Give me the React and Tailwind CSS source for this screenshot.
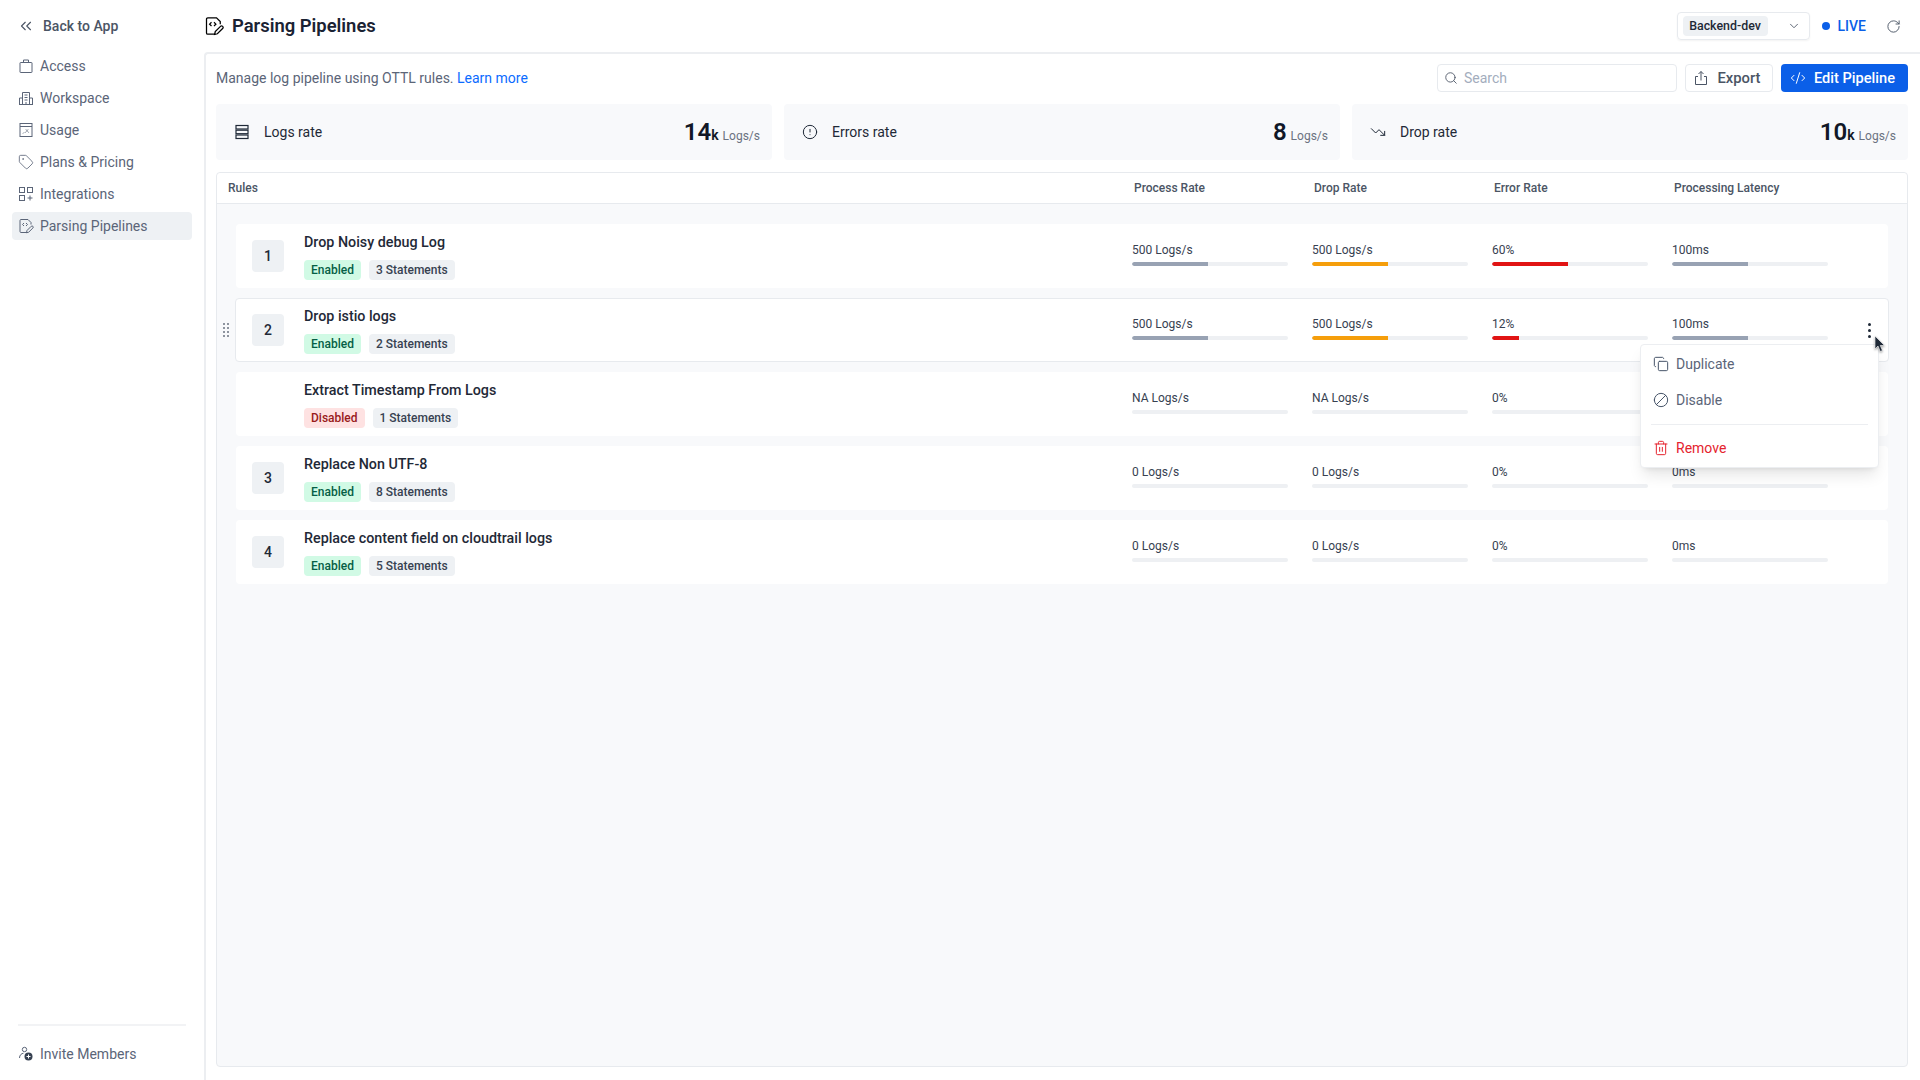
import {
  ChevronDown,
  ChevronsLeft,
  CircleAlert,
  CodeXml,
  Ban,
  Copy,
  RotateCw,
  Search,
  Tag,
  Trash2,
  TrendingDown,
} from "lucide-react";

const FONT = "font-['Roboto','Liberation_Sans',sans-serif]";

function BagIcon() {
  return (
    <svg width="16" height="16" viewBox="0 0 16 16" fill="none" stroke="currentColor" strokeWidth="1">
      <rect x="2" y="4.500" width="12" height="10" rx="0.500" />
      <path d="M5.500 4.500V2h5v2.500" />
    </svg>
  );
}

function BuildingIcon() {
  return (
    <svg width="16" height="16" viewBox="0 0 16 16" fill="none" stroke="currentColor" strokeWidth="1">
      <path d="M4.500 14.500V2.500h7v12" />
      <path d="M1.500 14.500V8h3M11.500 8h3v6.500M1 14.500h14" />
      <path d="M6.500 5h3M6.500 7.500h3M6.500 10h3M8 12v2.500" />
    </svg>
  );
}

function UsageIcon() {
  return (
    <svg width="16" height="16" viewBox="0 0 16 16" fill="none" stroke="currentColor" strokeWidth="1">
      <rect x="2" y="1.500" width="12" height="13" />
      <path d="M2 4.500h12" />
      <path d="M5 11.500l1.500-1.500M8 7.500l3 3.500M10 7.500l-3 3.500" strokeDasharray="1.500 1" />
    </svg>
  );
}

function IntegrationsIcon() {
  return (
    <svg width="16" height="16" viewBox="0 0 16 16" fill="none" stroke="currentColor" strokeWidth="1">
      <rect x="1.500" y="1.500" width="5" height="5" />
      <rect x="9.500" y="1.500" width="5" height="5" />
      <rect x="1.500" y="9.500" width="5" height="5" />
      <path d="M12 9.500v5M9.500 12h5" />
    </svg>
  );
}

function PipelineIcon({ size = 16, strokeWidth = 1 }) {
  return (
    <svg width={size} height={size} viewBox="0 0 16 16" fill="none" stroke="currentColor" strokeWidth={strokeWidth}>
      <path d="M9 14.500H3a1 1 0 0 1-1-1v-11a1 1 0 0 1 1-1h7l3 3v2" />
      <path d="M6 5L4.500 6.500 6 8M8 5l1.500 1.500L8 8" />
      <path d="M8.500 14.800l.5-2.300 4.200-4.200a1.200 1.200 0 0 1 1.700 1.700l-4.200 4.200z" />
    </svg>
  );
}

function InviteIcon() {
  return (
    <svg width="16" height="16" viewBox="0 0 16 16" fill="none">
      <circle cx="6.500" cy="3.500" r="2.200" stroke="currentColor" />
      <path d="M1.500 12c0-3 2-4.500 4-4.800" stroke="currentColor" />
      <circle cx="10.500" cy="10.500" r="4" fill="#374151" />
      <path d="M10.500 8.500v4M8.500 10.500h4" stroke="#fff" />
    </svg>
  );
}

function StackIcon() {
  return (
    <svg width="20" height="20" viewBox="0 0 20 20" fill="none" stroke="currentColor" strokeWidth="1.200">
      <rect x="4" y="3.500" width="12" height="3.500" />
      <rect x="4" y="8.200" width="12" height="3.500" />
      <rect x="4" y="13" width="12" height="3.500" />
    </svg>
  );
}

function DragHandle() {
  return (
    <svg width="6" height="14" viewBox="0 0 6 14" fill="#6b7280">
      {[1, 5].map((cx) =>
        [1, 5, 9, 13].map((cy) => <circle key={`${cx}-${cy}`} cx={cx} cy={cy} r="1" />)
      )}
    </svg>
  );
}

function Cursor() {
  return (
    <svg width="12" height="18" viewBox="0 0 12 18" className="drop-shadow-[0_1px_1px_rgba(0,0,0,0.4)]">
      <path d="M1 1v13l3-3 2.200 5.500 2.200-1L6.300 10.500H10.500z" fill="#1f2937" stroke="#fff" strokeWidth="0.600" />
    </svg>
  );
}

const NAV = [
  { label: "Access", icon: <BagIcon /> },
  { label: "Workspace", icon: <BuildingIcon /> },
  { label: "Usage", icon: <UsageIcon /> },
  { label: "Plans & Pricing", icon: <Tag size={16} strokeWidth={1.25} /> },
  { label: "Integrations", icon: <IntegrationsIcon /> },
  { label: "Parsing Pipelines", icon: <PipelineIcon />, active: true },
];

const STATS = [
  { label: "Logs rate", value: "14", unit: "k", icon: <StackIcon /> },
  { label: "Errors rate", value: "8", unit: "", icon: <CircleAlert size={16} strokeWidth={1.5} className="mx-0.5" /> },
  { label: "Drop rate", value: "10", unit: "k", icon: <TrendingDown size={16} strokeWidth={1.5} className="mx-0.5" /> },
];

const RULES = [
  {
    index: "1",
    name: "Drop Noisy debug Log",
    enabled: true,
    statements: "3 Statements",
    metrics: [["500 Logs/s", 49], ["500 Logs/s", 49], ["60%", 49], ["100ms", 49]],
  },
  {
    index: "2",
    name: "Drop istio logs",
    enabled: true,
    statements: "2 Statements",
    metrics: [["500 Logs/s", 49], ["500 Logs/s", 49], ["12%", 17], ["100ms", 49]],
    open: true,
  },
  {
    index: "",
    name: "Extract Timestamp From Logs",
    enabled: false,
    statements: "1 Statements",
    metrics: [["NA Logs/s", 0], ["NA Logs/s", 0], ["0%", 0]],
  },
  {
    index: "3",
    name: "Replace Non UTF-8",
    enabled: true,
    statements: "8 Statements",
    metrics: [["0 Logs/s", 0], ["0 Logs/s", 0], ["0%", 0], ["0ms", 0]],
  },
  {
    index: "4",
    name: "Replace content field on cloudtrail logs",
    enabled: true,
    statements: "5 Statements",
    metrics: [["0 Logs/s", 0], ["0 Logs/s", 0], ["0%", 0], ["0ms", 0]],
  },
];

const BAR_COLORS = ["bg-[#98a2b3]", "bg-[#f59e0b]", "bg-[#e11414]", "bg-[#98a2b3]"];

function Metric({ text, percent, color }) {
  return (
    <div className="w-[156px] mb-1">
      <div className="text-xs leading-4 text-[#374151]">{text}</div>
      <div className="mt-1 h-1 rounded-full bg-[#eef0f3] overflow-hidden">
        <div className={`h-full rounded-l-full ${color}`} style={{ width: `${percent}%` }} />
      </div>
    </div>
  );
}

function RowMenu() {
  return (
    <div className="absolute left-[1404px] top-[45px] z-10 w-[239px] h-[124px] rounded bg-white border border-[#eceef1] shadow-lg pt-px text-sm text-[#5b6578]">
      <div className="flex items-center gap-[7px] h-9 px-3">
        <Copy size={16} strokeWidth={1.5} className="text-[#475569]" />
        Duplicate
      </div>
      <div className="flex items-center gap-[7px] h-9 px-3">
        <Ban size={16} strokeWidth={1.5} className="-scale-x-100 text-[#475569]" />
        Disable
      </div>
      <div className="mx-2.5 mt-1.5 h-px bg-[#eceef1]" />
      <div className="flex items-center gap-[7px] h-9 mt-[5px] px-3 text-[#e5232e]">
        <Trash2 size={16} strokeWidth={1.5} />
        Remove
      </div>
    </div>
  );
}

function RuleRow({ rule }) {
  return (
    <div
      className={`relative flex items-center h-16 rounded pl-4 pr-[60px] bg-white ${
        rule.open ? "border border-[#e7eaee] -mx-px" : ""
      }`}
    >
      {rule.open && (
        <div className="absolute left-[-13px] top-[24px]">
          <DragHandle />
        </div>
      )}
      <div
        className={`w-8 h-8 shrink-0 rounded flex items-center justify-center text-sm font-medium text-[#1f2937] mr-5 ${
          rule.index ? "bg-[#eef1f4]" : ""
        }`}
      >
        {rule.index}
      </div>
      <div className="flex-1 min-w-0">
        <div className="text-[14.3px] leading-5 font-medium text-[#1f2937]">{rule.name}</div>
        <div className="flex gap-2 mt-2 text-xs leading-5 font-medium">
          <span
            className={`px-[7px] rounded-sm ${
              rule.enabled ? "bg-[#d1fae5] text-[#065f46]" : "bg-[#fee2e2] text-[#991b1b]"
            }`}
          >
            {rule.enabled ? "Enabled" : "Disabled"}
          </span>
          <span className="px-[7px] rounded-sm bg-[#eef1f4] text-[#374151]">{rule.statements}</span>
        </div>
      </div>
      <div className="flex gap-6 w-[696px]">
        {rule.metrics.map(([text, percent], i) => (
          <Metric key={i} text={text} percent={percent} color={BAR_COLORS[i]} />
        ))}
      </div>
      {rule.open && (
        <>
          <div className="absolute left-[1632px] top-[24px] flex flex-col gap-[3px]">
            <span className="w-[3px] h-[3px] rounded-full bg-[#1f2937]" />
            <span className="w-[3px] h-[3px] rounded-full bg-[#1f2937]" />
            <span className="w-[3px] h-[3px] rounded-full bg-[#1f2937]" />
          </div>
          <RowMenu />
          <div className="absolute left-[1638px] top-[36px] z-20">
            <Cursor />
          </div>
        </>
      )}
    </div>
  );
}

export default function App() {
  return (
    <div className={`flex h-screen bg-white overflow-hidden ${FONT}`}>
      <aside className="w-[204px] shrink-0 flex flex-col px-3">
        <div className="flex items-center h-[52px] pl-[5px] gap-[8px] text-sm font-medium text-[#4b5565]">
          <ChevronsLeft size={18} strokeWidth={1.5} />
          Back to App
        </div>
        <nav className="flex flex-col gap-1 text-sm text-[#5b6578]">
          {NAV.map((item) => (
            <div
              key={item.label}
              className={`flex items-center gap-1.5 h-7 pl-1.5 rounded ${item.active ? "bg-[#eef1f4]" : ""}`}
            >
              {item.icon}
              {item.label}
            </div>
          ))}
        </nav>
        <div className="mt-auto mx-1.5 border-t-2 border-[#f2f3f5] h-[56px] pt-[2px] flex items-center gap-1.5 text-sm text-[#5b6578]">
          <InviteIcon />
          Invite Members
        </div>
      </aside>

      <main className="flex-1 flex flex-col min-w-0">
        <header className="h-[52px] shrink-0 flex items-center pr-[19px]">
          <PipelineIcon size={20} />
          <h1 className="ml-2 text-[18.4px] font-semibold text-[#1a2233]">Parsing Pipelines</h1>
          <div className="ml-auto w-[133px] h-7 rounded border border-[#e7eaee] flex items-center justify-between pl-[5px] pr-2 shadow-xs">
            <span className="h-5 w-[85px] rounded-sm bg-[#eef1f4] text-[12.4px] font-medium leading-5 text-center text-[#1f2937]">
              Backend-dev
            </span>
            <ChevronDown size={14} strokeWidth={1.5} className="text-[#4b5565]" />
          </div>
          <span className="ml-[12px] w-2 h-2 rounded-full bg-[#0b5fe8]" />
          <span className="ml-2 text-sm font-medium text-[#0b5fe8]">LIVE</span>
          <RotateCw size={15} strokeWidth={1.5} className="ml-[20px] text-[#4b5565]" />
        </header>

        <section className="flex-1 min-h-0 flex flex-col border-t-2 border-l-2 border-[#eceef1] rounded-tl pl-2.5 pr-3 pb-[13px]">
          <div className="flex items-center h-7 mt-[10px] gap-2">
            <p className="text-sm text-[#5b6578]">
              Manage log pipeline using OTTL rules. <span className="text-[#0b6bff]">Learn more</span>
            </p>
            <div className="ml-auto w-[240px] h-7 rounded border border-[#e7eaee] flex items-center gap-1.5 px-1.5 text-sm text-[#a3adbd]">
              <Search size={14} strokeWidth={1.5} className="text-[#4b5565]" />
              Search
            </div>
            <button className="w-[88px] h-7 rounded border border-[#e7eaee] flex items-center justify-center gap-2 pr-1 text-[14.8px] leading-5 font-medium text-[#4b5565]">
              <svg width="16" height="16" viewBox="0 0 16 16" fill="none" stroke="currentColor" strokeWidth="1">
                <path d="M8 10.500V1.500M5.500 4L8 1.500 10.500 4M5 6.500H2.500v8h11v-8H11" />
              </svg>
              Export
            </button>
            <button className="w-[127px] h-7 rounded bg-[#0b5fe8] flex items-center justify-center gap-2 pr-1 text-[14.6px] leading-[21px] font-medium text-white">
              <CodeXml size={16} strokeWidth={1.5} />
              Edit Pipeline
            </button>
          </div>

          <div className="grid grid-cols-3 gap-3 mt-3">
            {STATS.map((stat) => (
              <div key={stat.label} className="h-14 rounded bg-[#f8f9fb] flex items-center pr-3 pl-4 gap-3 text-[#1f2937]">
                {stat.icon}
                <span className="text-sm">{stat.label}</span>
                <div className="ml-auto flex items-baseline gap-1">
                  <span className="font-semibold text-[#111827]">
                    <span className="text-2xl">{stat.value}</span>
                    {stat.unit && <span className="text-sm">{stat.unit}</span>}
                  </span>
                  <span className="text-xs text-[#6b7280]">Logs/s</span>
                </div>
              </div>
            ))}
          </div>

          <div className="flex-1 flex flex-col mt-3 min-h-0 rounded border border-[#e7eaee] bg-[#f8f9fb]">
            <div className="h-[31px] shrink-0 flex items-center bg-white border-b border-[#e7eaee] rounded-t pl-[11px] text-xs font-medium text-[#4b5565]">
              <span className="flex-1">Rules</span>
              <div className="flex gap-6 pr-[79px]">
                <span className="w-[156px] pl-0.5">Process Rate</span>
                <span className="w-[156px] pl-0.5">Drop Rate</span>
                <span className="w-[156px] pl-0.5">Error Rate</span>
                <span className="w-[156px] pl-0.5">Processing Latency</span>
              </div>
            </div>
            <div className="flex flex-col gap-2.5 pt-5 px-[19px]">
              {RULES.map((rule) => (
                <RuleRow key={rule.name} rule={rule} />
              ))}
            </div>
          </div>
        </section>
      </main>
    </div>
  );
}
